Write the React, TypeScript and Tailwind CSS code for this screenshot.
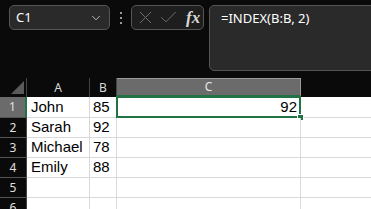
import { ChevronDown, X, Check } from "lucide-react";

const rows = [
  ["John", "85", ""],
  ["Sarah", "92", ""],
  ["Michael", "78", ""],
  ["Emily", "88", ""],
  ["", "", ""],
  ["", "", ""],
];

export default function App() {
  return (
    <div className="w-[371px] h-[209px] overflow-hidden bg-[#0a0a0a] font-['Noto_Sans',sans-serif]">
      {/* Formula bar */}
      <div className="h-[78px] flex items-start pt-[5px] pl-[9px] gap-[5px]">
        <div className="w-[101px] shrink-0 h-[25px] rounded-[5px] border border-[#555] bg-[#2a2a2a] flex items-center justify-between pl-[6px] pr-[6px] text-white text-[13px]">
          <span>C1</span>
          <ChevronDown className="w-[14px] h-[14px] text-[#cfcfcf]" strokeWidth={1.5} />
        </div>
        <div className="w-[11px] shrink-0 h-[25px] flex flex-col items-center justify-center gap-[3px]">
          <span className="w-[2px] h-[2px] bg-[#9a9a9a]" />
          <span className="w-[2px] h-[2px] bg-[#9a9a9a]" />
          <span className="w-[2px] h-[2px] bg-[#9a9a9a]" />
        </div>
        <div className="w-[73px] shrink-0 h-[25px] rounded-[5px] border border-[#555] bg-[#1e1e1e] flex items-center pl-[3px] gap-[2px]">
          <X className="w-[21px] h-[21px] text-[#6e6e6e]" strokeWidth={1.1} />
          <Check className="w-[21px] h-[21px] text-[#6e6e6e]" strokeWidth={1.1} />
          <span className="ml-[5px] text-[#d8d8d8] text-[17px] italic font-semibold font-['Liberation_Serif',serif] leading-none">
            fx
          </span>
        </div>
        <div className="w-[170px] shrink-0 h-[66px] rounded-[5px] border border-[#555] bg-[#2a2a2a] pl-[11px] pt-[3px] text-white text-[13px]">
          =INDEX(B:B, 2)
        </div>
      </div>

      {/* Grid */}
      <div className="grid grid-cols-[27px_63px_27px_184px_1fr]">
        {/* Header row */}
        <div className="h-[19px] border-r border-[#444] flex items-end justify-end pr-[2px] pb-[3px]">
          <div className="w-0 h-0 border-l-[13px] border-l-transparent border-b-[13px] border-b-[#5a5a5a]" />
        </div>
        <div className="h-[19px] border-r border-[#444] flex items-center justify-center text-[12px] text-[#d8d8d8]">A</div>
        <div className="h-[19px] border-r border-[#444] flex items-center justify-center text-[12px] text-[#d8d8d8]">B</div>
        <div className="h-[19px] border-r border-[#9a9a9a] border-t border-t-[#9a9a9a] border-b-2 border-b-[#217346] bg-[#6b6b6b] flex items-center justify-center text-[12px] text-[#e8e8e8]">C</div>
        <div className="h-[19px]" />

        {rows.map((r, i) => {
          const sel = i === 0;
          const h = i === 0 ? "h-[21px]" : "h-[20px]";
          return (
            <div key={i} className="contents">
              <div
                className={`${h} border-b border-[#555] flex items-center justify-center text-[12px] text-[#e0e0e0] ${
                  sel ? "bg-[#6b6b6b] border-r-2 border-r-[#217346]" : "border-r border-r-[#444]"
                }`}
              >
                {i + 1}
              </div>
              <div className={`${h} bg-white border-r border-b border-[#d9d9d9] pl-[4px] flex items-center text-[15px] text-black font-['Liberation_Sans',sans-serif]`}>
                {r[0]}
              </div>
              <div className={`${h} bg-white border-r border-b border-[#d9d9d9] pl-[3px] flex items-center text-[15px] text-black font-['Liberation_Sans',sans-serif]`}>
                {r[1]}
              </div>
              <div className={`${h} relative bg-white border-r border-b border-[#d9d9d9] flex items-center justify-end pr-[3px] text-[15px] text-black font-['Liberation_Sans',sans-serif]`}>
                {sel && (
                  <>
                    <span>92</span>
                    <div className="absolute -left-[1px] -top-[1px] -right-[1px] -bottom-[1px] border-2 border-[#217346]" />
                    <div className="absolute -right-[3px] -bottom-[3px] w-[5px] h-[5px] bg-[#217346] outline outline-1 outline-white" />
                  </>
                )}
              </div>
              <div className={`${h} bg-white border-b border-[#d9d9d9]`} />
            </div>
          );
        })}
      </div>
    </div>
  );
}
